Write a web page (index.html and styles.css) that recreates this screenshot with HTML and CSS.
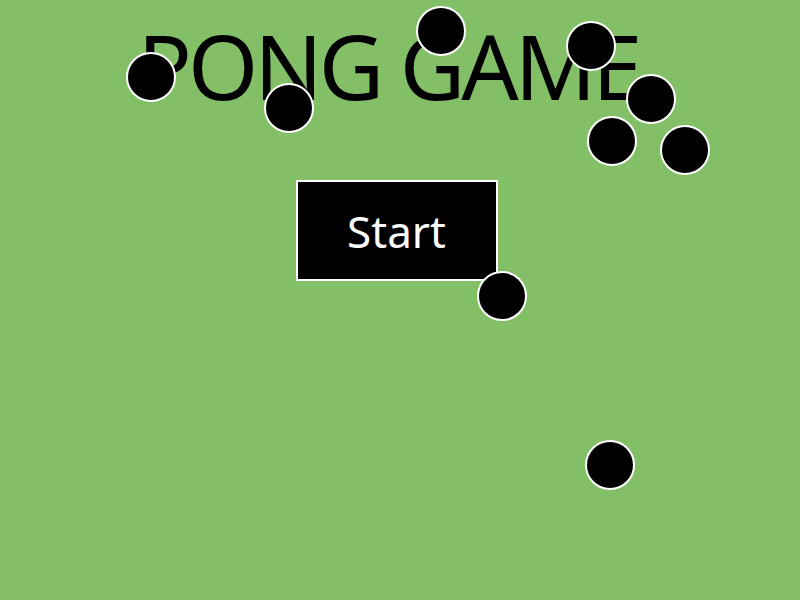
FILE: index.html
```html
<!DOCTYPE html>
<html>
<head>
<meta charset="utf-8">
<link rel="stylesheet" href="styles.css">
</head>
<body>
<main class="screen">
  <h1 class="title">PONG GAME</h1>
  <button class="start">Start</button>
  <div class="ball" style="left:126px;top:52px"></div>
  <div class="ball" style="left:264px;top:83px"></div>
  <div class="ball" style="left:416px;top:6px"></div>
  <div class="ball" style="left:566px;top:21px"></div>
  <div class="ball" style="left:626px;top:74px"></div>
  <div class="ball" style="left:587px;top:116px"></div>
  <div class="ball" style="left:660px;top:125px"></div>
  <div class="ball" style="left:477px;top:271px"></div>
  <div class="ball" style="left:585px;top:440px"></div>
</main>
</body>
</html>
```
FILE: styles.css
```css
html, body {
  margin: 0;
  padding: 0;
  width: 800px;
  height: 600px;
  overflow: hidden;
  background: #83bf67;
}
.screen {
  position: relative;
  width: 800px;
  height: 600px;
  display: flex;
  flex-direction: column;
  align-items: center;
  font-family: "Noto Sans", "Open Sans", sans-serif;
}
.title {
  margin: 10px 0 0 0;
  font-weight: 400;
  font-size: 90px;
  line-height: 110px;
  color: #000;
  letter-spacing: -4px;
  padding-right: 24px;
}
.start {
  margin-top: 60px;
  margin-right: 7px;
  width: 202px;
  height: 101px;
  background: #000;
  color: #fff;
  border: 2px solid #fff;
  font-family: "Noto Sans", "Open Sans", sans-serif;
  font-size: 44px;
  padding: 0;
}
.ball {
  position: absolute;
  width: 46px;
  height: 46px;
  border-radius: 50%;
  background: #000;
  border: 2px solid #fff;
}
```
